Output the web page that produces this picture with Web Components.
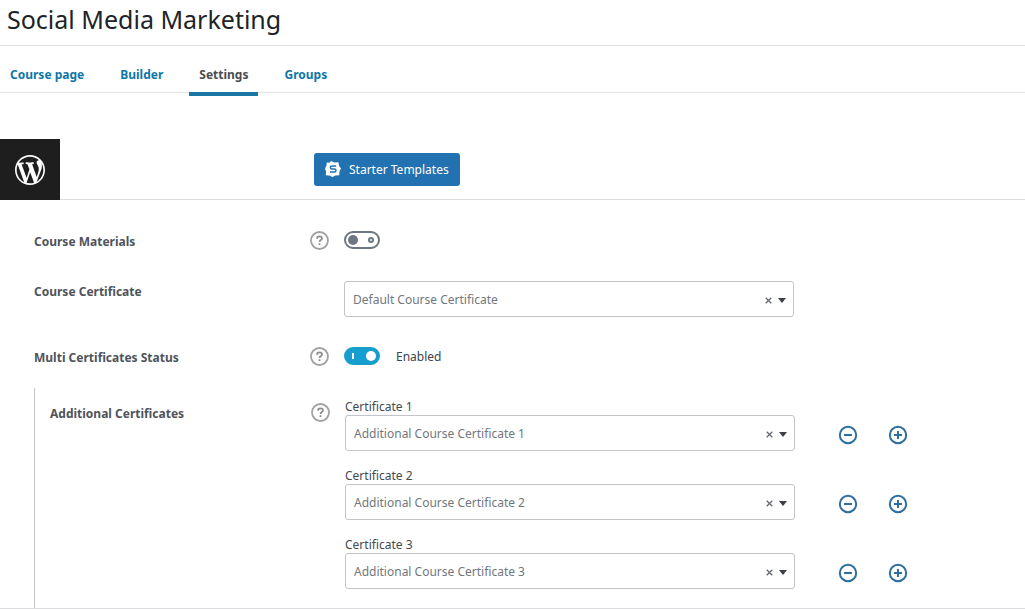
<!DOCTYPE html>
<html lang="en">
<head>
<meta charset="UTF-8">
<meta name="viewport" content="width=device-width, initial-scale=1.0">
<title>Social Media Marketing</title>
<style>
  body {
    margin: 0;
    background: #fff;
    color: #3c434a;
    font-family: "Noto Sans", "Open Sans", sans-serif;
    font-size: 12px;
  }
</style>
</head>
<body>
<course-header heading="Social Media Marketing">
  <course-tab>Course page</course-tab>
  <course-tab>Builder</course-tab>
  <course-tab active>Settings</course-tab>
  <course-tab>Groups</course-tab>
</course-header>
<editor-toolbar>Starter Templates</editor-toolbar>
<settings-panel>
  <setting-row label="Course Materials" help>
    <toggle-switch label="Course Materials"></toggle-switch>
  </setting-row>
  <setting-row label="Course Certificate">
    <select-box label="Course Certificate" value="Default Course Certificate"></select-box>
  </setting-row>
  <setting-row label="Multi Certificates Status" help>
    <toggle-switch label="Multi Certificates Status" checked>Enabled</toggle-switch>
  </setting-row>
  <setting-row label="Additional Certificates" help nested>
    <certificate-item number="1"></certificate-item>
    <certificate-item number="2"></certificate-item>
    <certificate-item number="3"></certificate-item>
  </setting-row>
</settings-panel>

<script>
class CourseHeader extends HTMLElement {
  constructor() {
    super();
    this.attachShadow({ mode: "open" });
  }

  connectedCallback() {
    this.shadowRoot.innerHTML = `
      <style>
        :host {
          display: block;
        }
        h1 {
          margin: 0;
          padding: 3px 7px 10px;
          border-bottom: 1px solid #dfe1e3;
          color: #1d2327;
          font-size: 25px;
          font-weight: 400;
          line-height: 32px;
        }
        nav {
          display: flex;
          gap: 16px;
          height: 46px;
          border-bottom: 1px solid #e2e4e7;
        }
      </style>
      <h1>${this.getAttribute("heading")}</h1>
      <nav><slot></slot></nav>
    `;
  }
}
customElements.define("course-header", CourseHeader);

class CourseTab extends HTMLElement {
  constructor() {
    super();
    this.attachShadow({ mode: "open" });
  }

  connectedCallback() {
    this.shadowRoot.innerHTML = `
      <style>
        :host {
          display: block;
        }
        a {
          display: block;
          height: 30px;
          padding: 16px 10px 0;
          border-bottom: 4px solid transparent;
          color: #0e76a8;
          font-weight: 700;
          line-height: 26px;
          text-decoration: none;
        }
        :host([active]) a {
          border-color: #1a76a5;
          color: #4a4c50;
        }
      </style>
      <a href="#"><slot></slot></a>
    `;
  }
}
customElements.define("course-tab", CourseTab);

class EditorToolbar extends HTMLElement {
  constructor() {
    super();
    this.attachShadow({ mode: "open" });
  }

  connectedCallback() {
    this.shadowRoot.innerHTML = `
      <style>
        :host {
          display: flex;
          align-items: center;
          gap: 254px;
          margin-top: 46px;
          height: 60px;
          border-bottom: 1px solid #dcdcde;
        }
        .logo {
          display: flex;
          align-items: center;
          justify-content: center;
          width: 60px;
          height: 61px;
          margin-bottom: -1px;
          background: #1e1e1e;
        }
        button {
          display: flex;
          align-items: center;
          gap: 8px;
          height: 33px;
          padding: 0 11px;
          border: 0;
          border-radius: 3px;
          background: #2271b1;
          color: #fff;
          font: inherit;
        }
        svg {
          display: block;
        }
      </style>
      <a class="logo" href="#" aria-label="View posts">
        <svg width="30" height="30" viewBox="0 0 20 20" fill="#fff">
          <path d="M20 10c0-5.51-4.49-10-10-10C4.48 0 0 4.49 0 10c0 5.52 4.48 10 10 10 5.51 0 10-4.48 10-10zM7.78 15.37L4.37 6.22c.55-.02 1.17-.08 1.17-.08.5-.06.44-1.13-.06-1.11 0 0-1.45.11-2.37.11-.18 0-.37 0-.58-.01C4.12 2.69 6.87 1.11 10 1.11c2.33 0 4.45.87 6.05 2.34-.68-.11-1.65.39-1.65 1.58 0 .74.45 1.36.9 2.1.35.61.55 1.36.55 2.46 0 1.49-1.4 5-1.4 5l-3.03-8.37c.54-.02.82-.17.82-.17.5-.05.44-1.25-.06-1.22 0 0-1.44.12-2.38.12-.87 0-2.33-.12-2.33-.12-.5-.03-.56 1.2-.06 1.22l.92.08 1.26 3.41zM17.41 10c.24-.64.74-1.87.43-4.25.7 1.29 1.05 2.71 1.05 4.25 0 3.29-1.73 6.24-4.4 7.78.97-2.59 1.94-5.2 2.92-7.78zM6.1 18.09C3.12 16.65 1.11 13.53 1.11 10c0-1.3.23-2.48.72-3.59C3.25 10.3 4.67 14.2 6.1 18.09zm4.03-6.63l2.58 6.98c-.86.29-1.76.45-2.71.45-.79 0-1.57-.11-2.29-.33.81-2.38 1.62-4.74 2.42-7.1z"/>
        </svg>
      </a>
      <button type="button">
        <svg width="16" height="16" viewBox="0 0 16 16">
          <path fill="#fff" d="M6 0l3.4 1.5 4-.2.8 3.8L16 7.4l-1.6 3-.1 3.8-3.9.3L7.4 16l-3-1.4-3.6-.4.2-3.8L0 7.6l1.4-2.9L1.8 1.6l2.6.1z"/>
          <path fill="none" stroke="#2271b1" stroke-width="1.5" d="M11.2 4.9H7a1.5 1.5 0 0 0 0 3.1h2.4a1.5 1.5 0 0 1 0 3.1H5"/>
        </svg>
        <slot></slot>
      </button>
    `;
  }
}
customElements.define("editor-toolbar", EditorToolbar);

class SettingsPanel extends HTMLElement {
  constructor() {
    super();
    this.attachShadow({ mode: "open" });
  }

  connectedCallback() {
    this.shadowRoot.innerHTML = `
      <style>
        :host {
          display: flex;
          flex-direction: column;
          gap: 30px;
          padding: 31px 34px 0;
          border-bottom: 1px solid #dcdcde;
        }
      </style>
      <slot></slot>
    `;
  }
}
customElements.define("settings-panel", SettingsPanel);

class SettingRow extends HTMLElement {
  constructor() {
    super();
    this.attachShadow({ mode: "open" });
  }

  connectedCallback() {
    const label = this.getAttribute("label");
    const help = this.hasAttribute("help") ? `
      <button type="button" aria-label="Help: ${label}">
        <svg width="19" height="19" viewBox="0 0 19 19" fill="none" stroke="#a0a2a4">
          <circle cx="9.5" cy="9.5" r="8.5" stroke-width="1.8"/>
          <path stroke="#8c8f92" stroke-width="1.8" d="M7 7.7c0-1.5 1.1-2.4 2.5-2.4s2.5.9 2.5 2.1c0 1.7-2.5 1.7-2.5 3.6M9.5 12.3v1.8"/>
        </svg>
      </button>` : "";

    this.shadowRoot.innerHTML = `
      <style>
        :host {
          display: grid;
          grid-template-columns: 276px 19px minmax(0, 1fr);
          align-items: start;
        }
        .label {
          margin-bottom: -2px;
          color: #50535a;
          font-weight: 700;
          line-height: 22px;
        }
        button {
          padding: 0;
          border: 0;
          background: none;
        }
        svg {
          display: block;
        }
        .field {
          grid-column: 3;
          display: flex;
          flex-direction: column;
          gap: 15px;
          padding-left: 15px;
        }
        :host([nested]) {
          grid-template-columns: 261px 19px minmax(0, 1fr);
          margin-top: -9px;
          padding: 9px 0 19px 15px;
          border-left: 1px solid #c3c4c7;
        }
        :host([nested]) .label,
        :host([nested]) button {
          margin-top: 6px;
        }
      </style>
      <div class="label">${label}</div>
      ${help}
      <div class="field"><slot></slot></div>
    `;
  }
}
customElements.define("setting-row", SettingRow);

class ToggleSwitch extends HTMLElement {
  constructor() {
    super();
    this.attachShadow({ mode: "open" });
  }

  connectedCallback() {
    const checked = this.hasAttribute("checked") ? "checked" : "";
    this.shadowRoot.innerHTML = `
      <style>
        :host {
          display: block;
          height: 20px;
        }
        label {
          display: flex;
          align-items: flex-start;
          gap: 16px;
          line-height: 20px;
        }
        input {
          appearance: none;
          display: flex;
          align-items: center;
          justify-content: space-between;
          box-sizing: border-box;
          width: 36px;
          height: 18px;
          margin: 0;
          padding: 0 4px 0 2px;
          border: 2px solid #6c7781;
          border-radius: 9px;
        }
        input::before {
          content: "";
          width: 10px;
          height: 10px;
          border-radius: 50%;
          background: #6c7781;
        }
        input::after {
          content: "";
          box-sizing: border-box;
          width: 6px;
          height: 6px;
          border: 2px solid #6c7781;
          border-radius: 50%;
        }
        input:checked {
          flex-direction: row-reverse;
          padding: 0 2px 0 6px;
          border-color: #169fce;
          background: #169fce;
        }
        input:checked::before {
          background: #fff;
        }
        input:checked::after {
          width: 2px;
          border: 0;
          border-radius: 0;
          background: #fff;
        }
      </style>
      <label>
        <input type="checkbox" aria-label="${this.getAttribute("label")}" ${checked}>
        <slot></slot>
      </label>
    `;
  }
}
customElements.define("toggle-switch", ToggleSwitch);

class SelectBox extends HTMLElement {
  constructor() {
    super();
    this.attachShadow({ mode: "open" });
  }

  connectedCallback() {
    this.shadowRoot.innerHTML = `
      <style>
        :host {
          display: block;
          position: relative;
          width: 100%;
          max-width: 450px;
        }
        select {
          appearance: none;
          display: block;
          width: 100%;
          height: 36px;
          padding: 0 40px 0 8px;
          border: 1px solid #c3c4c7;
          border-radius: 3px;
          background: #fff;
          color: #72777c;
          font: inherit;
        }
        /* clear button and arrow lie over the right end of the select */
        .tools {
          position: absolute;
          top: 0;
          right: 8px;
          display: flex;
          align-items: center;
          gap: 6px;
          height: 38px;
          pointer-events: none;
        }
        button {
          padding: 0;
          border: 0;
          background: none;
          pointer-events: auto;
        }
        svg {
          display: block;
        }
      </style>
      <select aria-label="${this.getAttribute("label")}">
        <option>${this.getAttribute("value")}</option>
      </select>
      <div class="tools">
        <button type="button" aria-label="Clear">
          <svg width="7" height="7" viewBox="0 0 7 7" stroke="#646970" stroke-width="1.3">
            <path d="M.7.7l5.6 5.6M6.3.7L.7 6.3"/>
          </svg>
        </button>
        <svg width="8" height="5" viewBox="0 0 8 5" fill="#3c3f43">
          <path d="M0 0h8L4 5z"/>
        </svg>
      </div>
    `;
  }
}
customElements.define("select-box", SelectBox);

class CertificateItem extends HTMLElement {
  constructor() {
    super();
    this.attachShadow({ mode: "open" });
  }

  connectedCallback() {
    const number = this.getAttribute("number");
    this.shadowRoot.innerHTML = `
      <style>
        :host {
          display: block;
        }
        .title {
          margin-bottom: -2px;
          color: #444950;
          line-height: 20px;
        }
        .line {
          display: flex;
          align-items: center;
        }
        .actions {
          display: flex;
          gap: 30px;
          padding: 3px 0 0 43px;
        }
        button {
          width: 20px;
          height: 20px;
          padding: 0;
          border: 0;
          background: none;
        }
        svg {
          display: block;
        }
      </style>
      <div class="title">Certificate ${number}</div>
      <div class="line">
        <select-box label="Certificate ${number}" value="Additional Course Certificate ${number}"></select-box>
        <div class="actions">
          <button type="button" aria-label="Remove certificate ${number}">
            <svg width="20" height="20" viewBox="0 0 20 20" fill="none" stroke="#2e6f9e" stroke-width="2">
              <circle cx="10" cy="10" r="8.2"/>
              <path d="M6 10h8"/>
            </svg>
          </button>
          <button type="button" aria-label="Add certificate">
            <svg width="20" height="20" viewBox="0 0 20 20" fill="none" stroke="#2e6f9e" stroke-width="2">
              <circle cx="10" cy="10" r="8.2"/>
              <path d="M6 10h8M10 6v8"/>
            </svg>
          </button>
        </div>
      </div>
    `;
  }
}
customElements.define("certificate-item", CertificateItem);
</script>
</body>
</html>
